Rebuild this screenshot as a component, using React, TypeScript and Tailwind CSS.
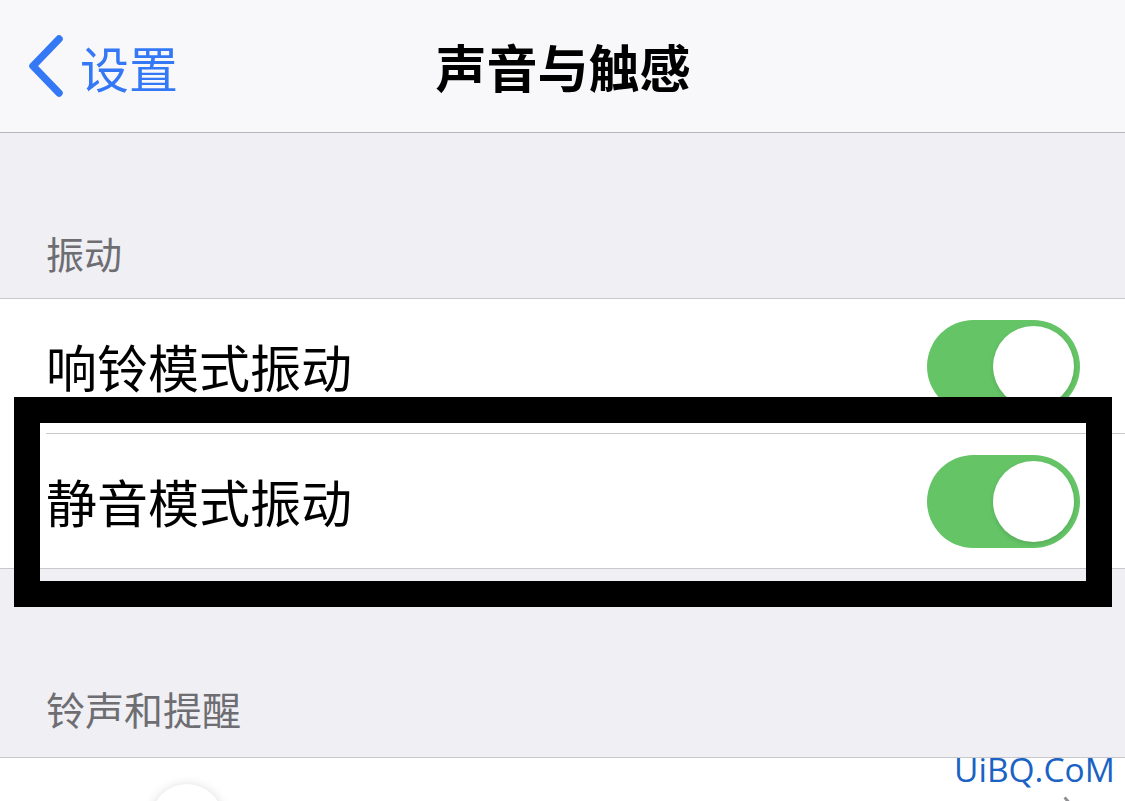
import React from "react";

const font = { fontFamily: '"Noto Sans CJK SC", "Noto Sans", sans-serif' };

function Toggle() {
  return (
    <div className="w-[153px] h-[93px] rounded-full bg-[#64c466] flex items-center justify-end pr-[6px]">
      <div className="w-[81px] h-[81px] rounded-full bg-white shadow-[0_2px_4px_rgba(0,0,0,0.12)]" />
    </div>
  );
}

export default function App() {
  return (
    <div className="relative w-[1125px] h-[801px] overflow-hidden bg-[#efeff4]" style={font}>
      {/* Nav bar */}
      <div className="h-[133px] bg-[#f8f8fa] border-b border-[#b5b5b8] flex items-center relative">
        <div className="flex items-center pl-[26px] gap-[14px] text-[#3478f6]">
          <svg width="40" height="64" viewBox="0 0 40 64">
            <polyline points="33,5 7,32 33,59" fill="none" stroke="#3478f6" strokeWidth="7.5" strokeLinecap="round" strokeLinejoin="round" />
          </svg>
          <span className="text-[49px] leading-none">设置</span>
        </div>
        <div className="absolute left-0 right-0 text-center text-[51px] font-bold leading-none text-black pl-[1px]">
          声音与触感
        </div>
      </div>

      {/* Vibration header */}
      <div className="h-[165px] flex items-end pl-[46px] pb-[26px]">
        <span className="text-[38px] leading-none text-[#6d6d72]">振动</span>
      </div>

      {/* Group */}
      <div className="bg-white border-t border-b border-[#c8c7cc]">
        <div className="h-[134px] flex items-center justify-between pl-[46px] pr-[45px]">
          <span className="text-[51px] leading-none text-black">响铃模式振动</span>
          <Toggle />
        </div>
        <div className="ml-[46px] h-px bg-[#c8c7cc]" />
        <div className="h-[134px] flex items-center justify-between pl-[46px] pr-[45px]">
          <span className="text-[51px] leading-none text-black">静音模式振动</span>
          <Toggle />
        </div>
      </div>

      {/* Ringtone header */}
      <div className="h-[188px] flex items-end pl-[46px] pb-[29px]">
        <span className="text-[39px] leading-none text-[#6d6d72]">铃声和提醒</span>
      </div>

      <div className="border-t border-[#c8c7cc] bg-white h-[60px] relative">
        <div className="absolute left-[151px] top-[26px] w-[72px] h-[72px] rounded-full bg-white shadow-[0_2px_12px_rgba(0,0,0,0.18)]" />
        <div className="absolute left-[1067px] top-[38px] w-[3px] h-[12px] bg-[#8e8e93] rotate-[-40deg]" />
      </div>

      {/* Black annotation box */}
      <div className="absolute left-[14px] top-[397px] w-[1098px] h-[210px] border-[26px] border-black" />

      {/* Watermark */}
      <div className="absolute left-[954px] top-[753px] text-[33.5px] leading-none text-[#1a63c4]" style={{ fontFamily: '"Open Sans", "DejaVu Sans", sans-serif' }}>
        UiBQ.CoM
      </div>
    </div>
  );
}
